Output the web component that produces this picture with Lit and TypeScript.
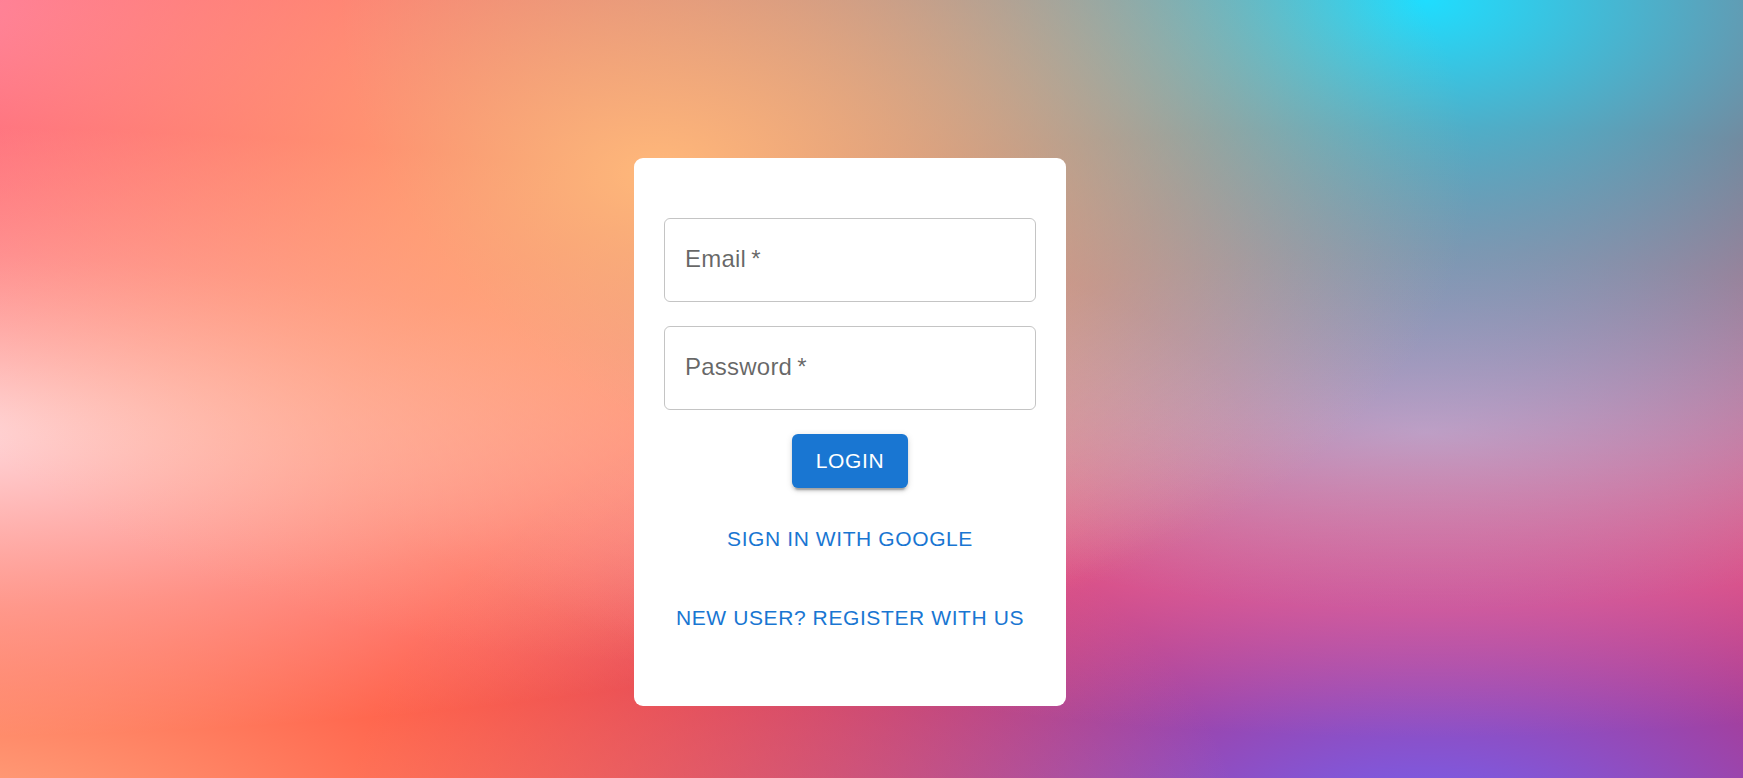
import { LitElement, html, css } from "lit";
import { customElement, property } from "lit/decorators.js";

@customElement("login-field")
export class LoginField extends LitElement {
  static styles = [
    css`
      :host {
        display: block;
      }

      .field {
        border: 1px solid rgba(0, 0, 0, 0.23);
        border-radius: 6px;
        box-sizing: border-box;
        color: rgba(0, 0, 0, 0.6);
        cursor: text;
        display: block;
        font-size: 24px;
        height: 84px;
        letter-spacing: 0.00938em;
        line-height: 34.5px;
        padding: 23px 20px;
        position: relative;
      }

      .field:focus-within {
        border-color: #1976d2;
      }

      .input {
        background: transparent;
        border: 0;
        box-sizing: border-box;
        font: inherit;
        height: 100%;
        left: 0;
        outline: none;
        padding: 0 20px;
        position: absolute;
        top: 0;
        width: 100%;
      }

      .input:focus + .label,
      .input:valid + .label {
        visibility: hidden;
      }
    `,
  ];

  @property() label = "";
  @property() type = "text";

  render() {
    return html`
      <label class="field">
        <input class="input" type=${this.type} required />
        <span class="label">${this.label}&thinsp;*</span>
      </label>
    `;
  }
}

@customElement("app-root")
export class AppRoot extends LitElement {
  static styles = [
    css`
      :host {
        background-color: #ff0000;
        background-image: radial-gradient(at 40% 20%, hsla(28, 100%, 74%, 1) 0px, transparent 50%),
          radial-gradient(at 80% 0%, hsla(189, 100%, 56%, 1) 0px, transparent 50%),
          radial-gradient(at 0% 50%, hsla(355, 100%, 93%, 1) 0px, transparent 50%),
          radial-gradient(at 80% 50%, hsla(340, 100%, 76%, 1) 0px, transparent 50%),
          radial-gradient(at 0% 100%, hsla(22, 100%, 77%, 1) 0px, transparent 50%),
          radial-gradient(at 80% 100%, hsla(242, 100%, 70%, 1) 0px, transparent 50%),
          radial-gradient(at 0% 0%, hsla(343, 100%, 76%, 1) 0px, transparent 50%);
        background-position: -110px 0;
        background-repeat: no-repeat;
        background-size: 1920px 864px;
        box-sizing: border-box;
        display: flex;
        align-items: flex-start;
        justify-content: center;
        font-family: "Liberation Sans", Arial, sans-serif;
        height: 100vh;
        overflow: hidden;
        padding: 158px 43px 0 0;
      }

      .card {
        background: #fff;
        border-radius: 9px;
        box-sizing: border-box;
        display: flex;
        flex-direction: column;
        align-items: center;
        gap: 24px;
        height: 548px;
        padding: 60px 30px;
        width: 432px;
      }

      .card login-field {
        width: 100%;
      }

      .button {
        background: transparent;
        border: 0;
        border-radius: 6px;
        color: #1976d2;
        cursor: pointer;
        font-family: inherit;
        font-size: 21px;
        letter-spacing: 0.02857em;
        line-height: 37px;
        padding: 8px 12px 10px;
        text-transform: uppercase;
        white-space: nowrap;
      }

      .button.contained {
        background: #1976d2;
        box-shadow: 0 4.5px 1.5px -3px rgba(0, 0, 0, 0.2), 0 3px 3px 0 rgba(0, 0, 0, 0.14),
          0 1.5px 7.5px 0 rgba(0, 0, 0, 0.12);
        color: #fff;
        line-height: 36px;
        padding: 9px 24px;
      }
    `,
  ];

  render() {
    return html`
      <div class="card">
        <login-field label="Email" type="email"></login-field>
        <login-field label="Password" type="password"></login-field>
        <button class="button contained">Login</button>
        <button class="button">Sign in with Google</button>
        <button class="button">New user? Register with us</button>
      </div>
    `;
  }
}
